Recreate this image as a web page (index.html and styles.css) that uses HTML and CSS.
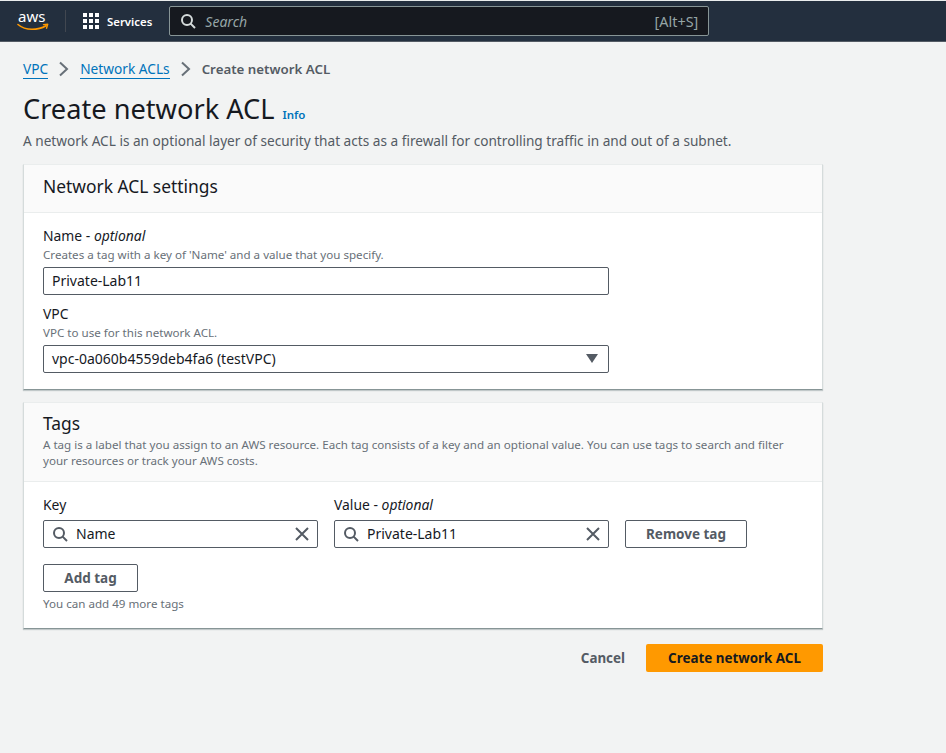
FILE: index.html
```html
<!DOCTYPE html>
<html>
<head>
  <title>Create network ACL</title>
  <link rel="stylesheet" href="styles.css">
</head>
<body>
  <header class="topbar">
    <svg class="aws-logo" width="36" height="30" viewBox="0 0 36 30">
      <text class="aws-text" x="1" y="16">aws</text>
      <path d="M1 18.5c4 3.4 9 4.8 14 4.8 5 0 10-1.2 14-3.6" fill="none" stroke="#f90" stroke-width="1.6" stroke-linecap="round"/>
      <path d="M26.5 18.6l4.2-.4-1.2 4" fill="none" stroke="#f90" stroke-width="1.4" stroke-linecap="round" stroke-linejoin="round"/>
    </svg>
    <span class="topbar-divider"></span>
    <svg class="grid-icon" width="16" height="16" viewBox="0 0 16 16" fill="#fff">
      <rect x="0" y="0" width="4" height="4"/><rect x="6" y="0" width="4" height="4"/><rect x="12" y="0" width="4" height="4"/>
      <rect x="0" y="6" width="4" height="4"/><rect x="6" y="6" width="4" height="4"/><rect x="12" y="6" width="4" height="4"/>
      <rect x="0" y="12" width="4" height="4"/><rect x="6" y="12" width="4" height="4"/><rect x="12" y="12" width="4" height="4"/>
    </svg>
    <span class="services">Services</span>
    <div class="global-search">
      <svg width="16" height="16" viewBox="0 0 16 16" fill="none" stroke="#d5dbdb" stroke-width="2">
        <circle cx="7" cy="7" r="5"/><path d="M10.6 10.6L15 15"/>
      </svg>
      <span class="search-text">Search</span>
      <span class="shortcut">[Alt+S]</span>
    </div>
  </header>

  <main class="content">
    <nav class="breadcrumbs">
      <a href="#">VPC</a>
      <svg class="crumb-arrow" width="16" height="16" viewBox="0 0 16 16"><path d="M4 1.5l7 6.5-7 6.5" fill="none" stroke="#687078" stroke-width="2"/></svg>
      <a href="#">Network ACLs</a>
      <svg class="crumb-arrow" width="16" height="16" viewBox="0 0 16 16"><path d="M4 1.5l7 6.5-7 6.5" fill="none" stroke="#687078" stroke-width="2"/></svg>
      <span class="crumb-current">Create network ACL</span>
    </nav>

    <div class="title-row">
      <h1>Create network ACL</h1>
      <a class="info-link" href="#">Info</a>
    </div>
    <p class="page-desc">A network ACL is an optional layer of security that acts as a firewall for controlling traffic in and out of a subnet.</p>

    <section class="card">
      <div class="card-head">
        <h2>Network ACL settings</h2>
      </div>
      <div class="card-body settings-body">
        <div class="field">
          <div class="label">Name - <em>optional</em></div>
          <div class="hint">Creates a tag with a key of 'Name' and a value that you specify.</div>
          <div class="input wide">Private-Lab11</div>
        </div>
        <div class="field">
          <div class="label">VPC</div>
          <div class="hint">VPC to use for this network ACL.</div>
          <div class="input wide select">
            <span>vpc-0a060b4559deb4fa6 (testVPC)</span>
            <svg width="12" height="9" viewBox="0 0 12 9"><path d="M0 0h12L6 9z" fill="#545b64"/></svg>
          </div>
        </div>
      </div>
    </section>

    <section class="card">
      <div class="card-head tags-head">
        <h2>Tags</h2>
        <p class="hint">A tag is a label that you assign to an AWS resource. Each tag consists of a key and an optional value. You can use tags to search and filter your resources or track your AWS costs.</p>
      </div>
      <div class="card-body tags-body">
        <div class="tag-row">
          <div class="tag-col">
            <div class="label">Key</div>
            <div class="input autosuggest">
              <svg width="16" height="16" viewBox="0 0 16 16" fill="none" stroke="#545b64" stroke-width="2"><circle cx="7" cy="7" r="5"/><path d="M10.6 10.6L15 15"/></svg>
              <span class="value">Name</span>
              <svg width="16" height="16" viewBox="0 0 16 16" fill="none" stroke="#545b64" stroke-width="2"><path d="M2 2l12 12M14 2L2 14"/></svg>
            </div>
          </div>
          <div class="tag-col">
            <div class="label">Value - <em>optional</em></div>
            <div class="input autosuggest">
              <svg width="16" height="16" viewBox="0 0 16 16" fill="none" stroke="#545b64" stroke-width="2"><circle cx="7" cy="7" r="5"/><path d="M10.6 10.6L15 15"/></svg>
              <span class="value">Private-Lab11</span>
              <svg width="16" height="16" viewBox="0 0 16 16" fill="none" stroke="#545b64" stroke-width="2"><path d="M2 2l12 12M14 2L2 14"/></svg>
            </div>
          </div>
          <button class="btn remove-btn">Remove tag</button>
        </div>
        <button class="btn add-btn">Add tag</button>
        <div class="hint tag-limit">You can add 49 more tags</div>
      </div>
    </section>

    <div class="actions">
      <button class="cancel">Cancel</button>
      <button class="btn-primary">Create network ACL</button>
    </div>
  </main>
</body>
</html>
```
FILE: styles.css
```css
* {
  box-sizing: border-box;
}

body {
  margin: 0;
  background-color: #f2f3f3;
  color: #16191f;
  font-family: "Noto Sans", "Open Sans", sans-serif;
  font-size: 14px;
  height: 753px;
  overflow: hidden;
}

/* top bar */
.topbar {
  display: flex;
  align-items: center;
  height: 42px;
  padding-left: 17px;
  background-color: #232f3e;
  border-top: 1px solid #eaeded;
  border-bottom: 1px solid #545b64;
}

.aws-logo {
  flex: none;
}

.aws-text {
  fill: #fff;
  font-size: 15px;
  font-family: "Noto Sans", sans-serif;
}

.topbar-divider {
  width: 1px;
  height: 22px;
  margin: 0 17px 0 12px;
  background-color: #414750;
}

.services {
  margin-left: 8px;
  color: #fff;
  font-size: 11.4px;
  font-weight: 600;
}

.global-search {
  display: flex;
  align-items: center;
  width: 540px;
  height: 30px;
  margin-left: 17px;
  padding: 0 10px;
  background-color: #16191f;
  border: 1px solid #879596;
  border-radius: 2px;
}

.search-text {
  margin-left: 9px;
  color: #95a5a6;
  font-style: italic;
  font-size: 14px;
}

.shortcut {
  margin-left: auto;
  color: #95a5a6;
  font-size: 14.4px;
}

/* page */
.content {
  width: 800px;
  margin-left: 23px;
}

.breadcrumbs {
  display: flex;
  align-items: center;
  height: 20px;
  margin-top: 17px;
  font-size: 13.7px;
}

.breadcrumbs a {
  color: #0073bb;
  text-decoration: none;
  border-bottom: 1px solid #0073bb;
  line-height: 18px;
}

.crumb-arrow {
  margin: 0 8px;
}

.crumb-current {
  color: #545b64;
  font-weight: 600;
  font-size: 13.3px;
}

.title-row {
  display: flex;
  align-items: baseline;
  margin-top: 11px;
}

h1 {
  margin: 0;
  font-size: 27.2px;
  line-height: 38px;
  font-weight: 400;
}

.info-link {
  margin-left: 8px;
  color: #0073bb;
  font-size: 11.5px;
  font-weight: 600;
  text-decoration: none;
}

.page-desc {
  margin: 3px 0 13px;
  color: #545b64;
  font-size: 13.63px;
  line-height: 20px;
}

.card {
  margin-bottom: 12px;
  background-color: #fff;
  border-left: 1px solid #d5dbdb;
  border-right: 1px solid #d5dbdb;
  border-top: 1px solid #eaeded;
  border-bottom: 1px solid #879596;
  box-shadow: 0 1px 1px rgba(0, 28, 36, 0.2);
}

.card-head {
  height: 48px;
  padding: 0 19px;
  background-color: #fafafa;
  border-bottom: 1px solid #eaeded;
}

h2 {
  margin: 0;
  font-size: 17.4px;
  font-weight: 400;
  line-height: 42px;
}

.tags-head {
  height: 79px;
}

.tags-head h2 {
  line-height: 26px;
  padding-top: 7px;
  height: 34px;
}

.tags-head .hint {
  margin: 0;
  line-height: 16px;
}

.settings-body {
  padding: 12px 19px 0;
  height: 176px;
}

.field {
  margin-bottom: 8px;
}

.label {
  font-size: 13.9px;
  line-height: 22px;
}

.hint {
  color: #687078;
  font-size: 11.6px;
  line-height: 16px;
}

.input {
  display: flex;
  align-items: center;
  height: 28px;
  margin-top: 4px;
  padding: 0 8px 1px;
  background-color: #fff;
  border: 1px solid #545b64;
  border-radius: 2px;
  font-size: 14px;
}

.wide {
  width: 566px;
}

.select {
  justify-content: space-between;
  padding-right: 10px;
}

.tags-body {
  padding: 12px 19px 0;
  height: 146px;
}

.tag-row {
  display: flex;
  align-items: flex-end;
  gap: 16px;
}

.tag-col {
  width: 275px;
}

.tag-col .label {
  line-height: 21px;
}

.autosuggest {
  margin-top: 5px;
  padding-right: 7px;
}

.autosuggest .value {
  flex: 1;
  margin-left: 8px;
}

.btn {
  height: 28px;
  background-color: #fff;
  border: 1px solid #545b64;
  border-radius: 2px;
  color: #545b64;
  font-family: inherit;
  font-size: 13.5px;
  font-weight: 700;
}

.remove-btn {
  width: 122px;
}

.add-btn {
  display: block;
  width: 95px;
  margin-top: 16px;
}

.tag-limit {
  margin-top: 4px;
}

.actions {
  display: flex;
  justify-content: flex-end;
  align-items: center;
  gap: 21px;
  margin-top: 15px;
}

.cancel {
  padding: 0;
  background: none;
  border: 0;
  color: #545b64;
  font-family: inherit;
  font-size: 13.4px;
  font-weight: 700;
}

.btn-primary {
  width: 177px;
  height: 28px;
  background-color: #f90;
  border: 0;
  border-radius: 2px;
  color: #16191f;
  font-family: inherit;
  font-size: 13.4px;
  font-weight: 700;
}
```
